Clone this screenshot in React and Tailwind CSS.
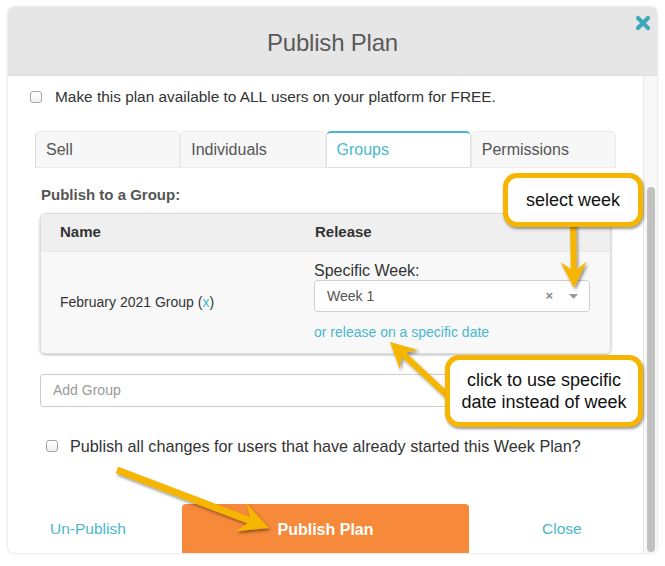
import React from "react";

function arrowPoints(x1, y1, x2, y2, w, L, H) {
  const dx = x2 - x1, dy = y2 - y1;
  const len = Math.hypot(dx, dy);
  const ux = dx / len, uy = dy / len;
  const nx = -uy, ny = ux;
  const neckX = x2 - ux * L * 0.72, neckY = y2 - uy * L * 0.72;
  const barbX = x2 - ux * L, barbY = y2 - uy * L;
  const p = [
    [x1 + nx * w / 2, y1 + ny * w / 2],
    [neckX + nx * w / 2, neckY + ny * w / 2],
    [barbX + nx * H / 2, barbY + ny * H / 2],
    [x2, y2],
    [barbX - nx * H / 2, barbY - ny * H / 2],
    [neckX - nx * w / 2, neckY - ny * w / 2],
    [x1 - nx * w / 2, y1 - ny * w / 2],
  ];
  return p.map((q) => q[0].toFixed(1) + "," + q[1].toFixed(1)).join(" ");
}

function Check() {
  return (
    <span className="inline-block w-[12px] h-[12px] rounded-[3px] border border-[#a3a3a3] bg-gradient-to-b from-white to-[#f0f0f0] shrink-0" />
  );
}

export default function App() {
  return (
    <div className="relative w-[665px] h-[566px] bg-white overflow-hidden font-['Liberation_Sans',Arial,sans-serif]">
      <div className="pt-[7px] pl-[8px]">
        <div className="w-[649px] h-[546px] rounded-[6px] overflow-hidden bg-white shadow-[0_0_3px_rgba(0,0,0,0.18)] flex flex-col">
          {/* header */}
          <div className="relative h-[69px] shrink-0 bg-[#e6e6e6] border-b border-[#dedede] flex items-center justify-center">
            <span className="mt-[3px] text-[24px] text-[#5a5a5a] tracking-[-0.2px]">Publish Plan</span>
            <svg className="absolute right-[6px] top-[8px]" width="16" height="16" viewBox="0 0 16 16">
              <path d="M3 3 L13 13 M13 3 L3 13" stroke="#3ea8ba" strokeWidth="4.2" strokeLinecap="round" />
            </svg>
          </div>
          {/* body */}
          <div className="flex h-[477px]">
            <div className="flex-1 overflow-hidden">
              <div className="mt-[11px] ml-[22px] h-[20px] flex items-center gap-[13px]">
                <Check />
                <span className="text-[15.4px] text-[#333]">Make this plan available to ALL users on your platform for FREE.</span>
              </div>

              <div className="mt-[24px] ml-[27px] w-[581px] h-[37px] grid grid-cols-4">
                <div className="rounded-t-[5px] border border-[#ebebeb] border-l-[#d9d9d9] bg-[#f7f7f7] flex items-center pl-[10px] text-[16px] text-[#555]">Sell</div>
                <div className="rounded-t-[5px] border border-[#ebebeb] bg-[#f7f7f7] flex items-center pl-[10px] text-[16px] text-[#555]">Individuals</div>
                <div className="rounded-t-[5px] border border-[#e0e0e0] border-t-2 border-t-[#4ab8cc] bg-white flex items-center pl-[10px] text-[16px] text-[#4ab8cc]">Groups</div>
                <div className="rounded-t-[5px] border border-[#ebebeb] bg-[#f7f7f7] flex items-center pl-[10px] text-[16px] text-[#555]">Permissions</div>
              </div>

              <div className="mt-[18px] ml-[33px] text-[15px] leading-[17px] font-bold text-[#555]">Publish to a Group:</div>

              <div className="mt-[10px] ml-[32px] w-[571px] rounded-[6px] border border-[#dcdcdc] shadow-[0_1px_3px_rgba(0,0,0,0.28)] overflow-hidden">
                <div className="h-[37px] bg-[#efefef] flex items-center text-[15px] font-bold text-[#333]">
                  <div className="w-[274px] pl-[19px]">Name</div>
                  <div>Release</div>
                </div>
                <div className="bg-[#f8f8f8] flex border-t border-[#e8e8e8]">
                  <div className="w-[273px] pl-[19px] flex items-center text-[14px] text-[#333]">
                    <span>
                      February 2021 Group (<span className="text-[#4ab8cc]">x</span>)
                    </span>
                  </div>
                  <div className="w-[276px] pt-[9px] pb-[12px]">
                    <div className="text-[16px] leading-[19px] text-[#333]">Specific Week:</div>
                    <div className="h-[32px] border border-[#cfcfcf] rounded-[4px] bg-white flex items-center pl-[12px] text-[14px] text-[#555]">
                      <span className="flex-1">Week 1</span>
                      <span className="text-[13px] font-bold text-[#888] mr-[16px]">×</span>
                      <svg width="9" height="5" viewBox="0 0 9 5" className="mr-[11px]">
                        <path d="M0 0 L9 0 L4.5 5 Z" fill="#9a9a9a" />
                      </svg>
                    </div>
                    <div className="mt-[12px] text-[14px] leading-[17px] text-[#4ab8cc]">or release on a specific date</div>
                  </div>
                </div>
              </div>

              <div className="mt-[20px] ml-[32px] w-[571px] h-[33px] border border-[#cccccc] rounded-[3px] flex items-center pl-[12px] text-[14px] text-[#999]">
                Add Group
              </div>

              <div className="mt-[29px] ml-[38px] h-[20px] flex items-center gap-[12px]">
                <Check />
                <span className="text-[16.2px] text-[#333]">Publish all changes for users that have already started this Week Plan?</span>
              </div>

              <div className="mt-[48px] ml-[42px] flex items-center">
                <span className="w-[132px] text-[15.5px] text-[#4ab8cc] -mt-[2px]">Un-Publish</span>
                <div className="w-[287px] h-[52px] shrink-0 rounded-[4px] bg-[#f7893b] flex items-center justify-center text-[16px] font-bold text-white">
                  Publish Plan
                </div>
                <span className="ml-[73px] text-[15.5px] text-[#4ab8cc] -mt-[2px]">Close</span>
              </div>
            </div>
            <div className="w-[14px] shrink-0 bg-[#f8f8f8] border-l border-[#e8e8e8]">
              <div className="mt-[111px] ml-[3px] w-[8px] h-[365px] rounded-full bg-[#c1c1c1]" />
            </div>
          </div>
        </div>
      </div>

      {/* annotation overlay */}
      <svg className="absolute left-0 top-0 pointer-events-none" width="665" height="566">
        <defs>
          <filter id="sh" x="-20%" y="-20%" width="140%" height="140%">
            <feDropShadow dx="1.5" dy="2" stdDeviation="1.5" floodColor="#000" floodOpacity="0.45" />
          </filter>
        </defs>
        <polygon points={arrowPoints(573, 222, 574, 288, 6, 26, 26)} fill="#f6b500" filter="url(#sh)" />
        <polygon points={arrowPoints(450, 398, 390, 342, 6, 26, 27)} fill="#f6b500" filter="url(#sh)" />
        <polygon points={arrowPoints(117, 470, 269, 528, 7, 30, 30)} fill="#f6b500" filter="url(#sh)" />
      </svg>

      <div className="absolute left-[503px] top-[173px] w-[140px] h-[54px] rounded-[14px] border-[5px] border-[#f6b500] bg-white shadow-[1px_2px_3px_rgba(0,0,0,0.4)] flex items-center justify-center text-[18px] text-[#111]">
        select week
      </div>
      <div className="absolute left-[445px] top-[355px] w-[198px] h-[72px] rounded-[14px] border-[5px] border-[#f6b500] bg-white shadow-[1px_2px_3px_rgba(0,0,0,0.4)] flex flex-col items-center justify-center text-[18px] leading-[22px] text-[#111]">
        <span>click to use specific</span>
        <span>date instead of week</span>
      </div>
    </div>
  );
}
